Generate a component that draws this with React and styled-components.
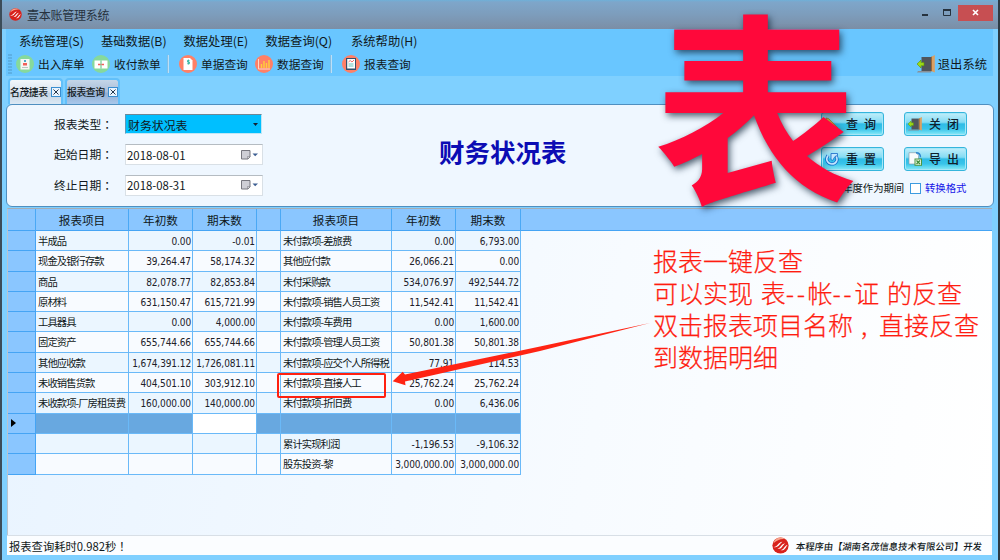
import React from "react";
import styled, { createGlobalStyle } from "styled-components";

const Global = createGlobalStyle`
  * { box-sizing: border-box; }
  html, body { margin: 0; padding: 0; }
  body { font-family: "Noto Sans CJK SC", sans-serif; color: #101820; overflow: hidden; }
  svg { display: block; flex: none; }
`;

const Window = styled.div`
  position: relative;
  width: 1000px;
  height: 560px;
  overflow: hidden;
  display: flex;
  flex-direction: column;
  background: #7fd0ff;
  border-left: 2px solid #3c4c58;
  border-right: 2px solid #2b3a44;
  white-space: nowrap;
`;

const TitleBar = styled.header`
  height: 29px;
  flex: none;
  display: flex;
  align-items: center;
  padding: 0 5px 0 7px;
  background: linear-gradient(#6fb0d8 0, #7ea6ca 2px, #7d9dbc 50%, #7b8ea6 100%);
`;

const TitleText = styled.h1`
  margin: 0 auto 0 5px;
  font-size: 12px;
  line-height: 20px;
  font-weight: 400;
  letter-spacing: -0.25px;
  color: #27323e;
`;

const WindowButton = styled.span`
  width: 22px;
  height: 16px;
  display: flex;
  align-items: center;
  justify-content: center;
  margin-bottom: 4px;
`;

const CloseButton = styled(WindowButton)`
  width: 35px;
  background: #c74f52;
`;

const Bars = styled.div`
  height: 47px;
  flex: none;
  margin: 0 5px 0 4px;
  background: #69c6ff;
`;

const MenuBar = styled.nav`
  height: 24px;
  display: flex;
  padding-left: 13px;
`;

const MenuItem = styled.span`
  width: ${(p) => p.$w}px;
  font-size: 12.3px;
  line-height: 24px;
`;

const ToolBar = styled.div`
  height: 23px;
  display: flex;
  align-items: center;
  padding: 0 6px 1px 2px;
`;

const Grip = styled.span`
  width: 4px;
  height: 20px;
  margin-right: 4px;
  background: radial-gradient(circle at 1px 1px, #57a4d6 0.6px, transparent 0.9px) 0 0 / 2px 3px;
`;

const Tool = styled.span`
  width: ${(p) => p.$w}px;
  display: flex;
  align-items: center;
  gap: 4px;
  font-size: 11.7px;
  line-height: 20px;
`;

const Divider = styled.i`
  width: 2px;
  height: 18px;
  background: linear-gradient(90deg, #69b0dd, #d8efff);
  margin-right: ${(p) => p.$gap}px;
`;

const ExitTool = styled.span`
  margin-left: auto;
  display: flex;
  align-items: center;
  gap: 3px;
  font-size: 12.3px;
  line-height: 20px;
`;

const TabStrip = styled.div`
  height: 28px;
  flex: none;
  display: flex;
  align-items: flex-end;
  gap: 2px;
  padding-left: 6px;
`;

const Tab = styled.div`
  width: 55px;
  height: 26px;
  padding: 0 0 0 0;
  display: flex;
  align-items: center;
  justify-content: space-between;
  border: 2px solid #62c0fa;
  border-bottom: 0;
  border-radius: 4px 4px 0 0;
  background: ${(p) => (p.$active ? "linear-gradient(#f2f7fb, #dae3ed 50%, #c6d4e2 55%, #dbe9f5)" : "linear-gradient(#c4d6e8, #a9bdd8 50%, #94adcf 55%, #a8c8ec)")};
  font-size: 9.8px;
  line-height: 20px;
  font-weight: 500;
  letter-spacing: -0.4px;
`;

const TabClose = styled.span`
  width: 10px;
  height: 10px;
  display: grid;
  place-items: center;
  border: 1px solid #3a8ed0;
  background: #e8f4ff;
`;

const QueryPanel = styled.section`
  height: 103px;
  flex: none;
  margin: 0 4px 0 4px;
  display: flex;
  border: 1.5px solid #4f8fc0;
  border-radius: 6px;
  background: #eff7ff;
`;

const Fields = styled.div`
  width: 411px;
  padding: 9px 0 0 47px;
`;

const Field = styled.div`
  height: 30.4px;
  display: flex;
  align-items: flex-start;
`;

const Label = styled.label`
  width: 71px;
  font-size: 11.8px;
  line-height: 20px;
  i { font-style: normal; font-family: "Noto Sans CJK TC", sans-serif; }
`;

const Select = styled.div`
  width: 137px;
  height: 20px;
  display: flex;
  align-items: center;
  justify-content: space-between;
  padding: 1px 3px 0 2px;
  border: 1px solid #5b9ab8;
  border-top-color: #6d8796;
  border-bottom-color: #bfe6f5;
  border-right-color: #bfe6f5;
  background: #00bfff;
  font-size: 11.9px;
  line-height: 18px;
`;

const DateInput = styled.div`
  width: 138px;
  height: 21px;
  display: flex;
  align-items: center;
  padding: 0 3px 0 1px;
  border: 1px solid #d9e0e6;
  border-top-color: #b5bcc2;
  background: #fff;
  font-size: 11.4px;
  line-height: 18px;
  span { flex: 1; }
`;

const Heading = styled.h2`
  width: 281px;
  margin: 0;
  padding: 28px 0 0 21px;
  font-size: 25.5px;
  line-height: 36px;
  font-weight: 700;
  color: #0c0cb4;
`;

const Actions = styled.div`
  flex: 1;
  padding: 7px 0 0 122px;
`;

const ButtonGrid = styled.div`
  display: grid;
  grid-template-columns: 63px 63px;
  grid-template-rows: 24px 24px;
  column-gap: 20px;
  row-gap: 11px;
`;

const Button = styled.button`
  display: flex;
  align-items: center;
  padding: 0 0 0 3px;
  border: 1px solid #35b5dc;
  border-radius: 3px;
  box-shadow: inset 0 0 0 1px #a5e7f8;
  background: linear-gradient(#c2eefa 0, #84dcf4 42%, #2fbce6 50%, #38c4ea 72%, #8cecf8 100%);
  color: #10202c;
  font-family: inherit;
  font-size: 12px;
  line-height: 20px;
  span { width: 36px; margin-left: 7px; display: flex; gap: 6px; }
  b { font-weight: 500; }
`;

const Options = styled.div`
  display: flex;
  align-items: center;
  margin-top: 8px;
  padding-left: 11px;
  font-size: 10.4px;
  line-height: 18px;
  letter-spacing: -0.1px;
`;

const Check = styled.span`
  width: 11px;
  height: 11px;
  margin: 0 4px 0 6px;
  border: 1px solid #3c9be0;
  background: #fff;
`;

const LinkText = styled.span`
  color: #1414e8;
`;

const GridArea = styled.main`
  flex: 1;
  margin: 1px 6px 0 5px;
  border-top: 1px solid #a5adb5;
  border-left: 1px solid #b8c4cf;
  background: linear-gradient(100deg, #e9f4ff 0%, #f7fbff 60%, #ffffff 100%);
`;

const cols = "28px 93px 64px 64px 24px 111px 64px 65px";

const HeaderRow = styled.div`
  height: 22px;
  display: grid;
  grid-template-columns: ${cols} 1fr;
  background: #8ac6ff;
  border-bottom: 1px solid #45a4f4;
`;

const HeadCell = styled.div`
  border-right: 1px solid #4aa8f5;
  text-align: center;
  font-size: 11.6px;
  line-height: 23px;
  &:last-child { border-right: 0; }
`;

const Row = styled.div`
  width: 513px;
  height: 20.3px;
  display: grid;
  grid-template-columns: ${cols};
  background: ${(p) => (p.$selected ? "#68a8e0" : p.$odd ? "#f8fbff" : "#ebf6ff")};
`;

const Cell = styled.div`
  overflow: hidden;
  border-right: 1px solid #6ab9f8;
  border-bottom: 1px solid #6ab9f8;
  line-height: 21px;
  background: ${(p) => (p.$editing ? "#fff" : "transparent")};
`;

const IndexCell = styled(Cell)`
  background: #8ac6ff;
  display: flex;
  align-items: center;
  padding-left: 3px;
  border-color: #45a4f4;
`;

const NameCell = styled(Cell)`
  padding-left: 2px;
  font-size: 10.3px;
  line-height: 20px;
  letter-spacing: -0.92px;
`;

const NumCell = styled(Cell)`
  padding-right: 1px;
  text-align: right;
  font-family: "DejaVu Sans Condensed", "Noto Sans", sans-serif;
  font-size: 10px;
  letter-spacing: -0.1px;
  color: #202028;
`;

const StatusBar = styled.footer`
  height: 20px;
  flex: none;
  margin: 0 6px 5px 5px;
  display: flex;
  align-items: center;
  justify-content: space-between;
  padding: 0 10px 0 2px;
  background: #fbfdff;
  border-top: 1px solid #d8dfe6;
  font-size: 11.3px;
  line-height: 18px;
  i { font-style: normal; font-family: "Noto Sans CJK TC", sans-serif; }
`;

const Credit = styled.span`
  display: flex;
  align-items: center;
  gap: 7px;
  font-size: 9.3px;
  b { font-weight: 500; transform: skewX(-6deg); }
`;

const BigMark = styled.div`
  position: absolute;
  left: 652px;
  top: -2px;
  width: 205px;
  font-size: 204px;
  line-height: 205px;
  font-weight: 700;
  color: #ff083a;
  text-shadow: 2px 3px 7px rgba(20, 40, 60, 0.75);
`;

const Note = styled.p`
  position: absolute;
  left: 651px;
  top: 244px;
  margin: 0;
  font-size: 25px;
  line-height: 32px;
  font-weight: 300;
  word-spacing: 2.3px;
  -webkit-text-stroke: 0.25px #ff1c10;
  color: #ff1c10;
`;

const Dashes = styled.span`
  letter-spacing: 2.5px;
`;

const Comma = styled.span`
  display: inline-block;
  width: 26px;
  padding-left: 8px;
`;

const HighlightBox = styled.div`
  position: absolute;
  left: 275px;
  top: 373px;
  width: 109px;
  height: 25px;
  border: 2px solid #ff2010;
  border-radius: 2px;
`;

const Arrow = styled.svg`
  position: absolute;
  left: 388px;
  top: 318px;
`;

const Logo = ({ size }) => (
  <svg width={size} height={size} viewBox="0 0 18 18">
    <circle cx="9" cy="9" r="8.6" fill="#d8221c" />
    <path d="M1.500 6.500a8 8 0 0 1 13-4c-5-1-9 1-13 4z" fill="#f7a48c" />
    <path d="M1.500 10.500c4 .5 5-5 9.500-5.500-3 2-4 7-9.500 5.500zM5 12.500c4 0 4.500-5.500 9-6-3 2-3.500 7-9 6zM9 14c4-.5 4-5 7.500-5.500-2 2-2.500 6.500-7.500 5.500z" fill="#fff" />
  </svg>
);

const Round = ({ color, children }) => (
  <svg width="18" height="18" viewBox="0 0 18 18">
    <circle cx="9" cy="9" r="9" fill={color} />
    {children}
  </svg>
);

const DoorIcon = ({ size = 18 }) => (
  <svg width={size} height={size} viewBox="0 0 18 18">
    <path d="M1 16h13v1.500H0z" fill="#8a9097" />
    <path d="M4.500 2H14v14H4.500z" fill="#50555c" />
    <path d="M14 2l3.800-2v17.500L14 16z" fill="#dba062" />
    <path d="M14 2l.8-.4v14.800L14 16z" fill="#8a5a2c" />
    <path d="M0 9l4-4v2.400h3v3.400H4V13z" fill="#9bd916" stroke="#5c8f0c" strokeWidth=".6" />
  </svg>
);

const PencilIcon = () => (
  <svg width="14" height="14" viewBox="0 0 14 14">
    <path d="M1 1l2.700.7L13 11l-2 2L1.600 3.700z" fill="#f2bd32" stroke="#a97515" strokeWidth=".7" />
  </svg>
);

const ResetIcon = () => (
  <svg width="14" height="14" viewBox="0 0 14 14">
    <path d="M3 3.500C0 8 3 12 7 12s6.500-4 4-8" fill="none" stroke="#1768c8" strokeWidth="3.200" />
    <path d="M3 3.500C0 8 3 12 7 12s6.500-4 4-8" fill="none" stroke="#c4e8ff" strokeWidth="1.600" />
    <path d="M6 1.500h6.500v2L10 4.500l-2.500 4-1.500-1z" fill="#c4e8ff" stroke="#1768c8" strokeWidth=".8" />
  </svg>
);

const ExportIcon = () => (
  <svg width="14" height="14" viewBox="0 0 14 14">
    <path d="M1 .7h7l2.500 2.500V12H1z" fill="#f8fbfd" stroke="#8aa0ae" strokeWidth=".7" />
    <path d="M8 .7c3 0 4.500 1.500 4.500 4.500" fill="none" stroke="#2c84cf" strokeWidth="1.400" />
    <rect x="7" y="7" width="6.500" height="6.300" fill="#e4f4dd" stroke="#4c9644" strokeWidth="1" />
    <path d="M8.500 8.500l3.500 3.500m0-3.500L8.500 12" stroke="#3e8c37" strokeWidth="1.200" />
  </svg>
);

const CalendarIcon = () => (
  <svg width="18" height="12" viewBox="0 0 18 12">
    <path d="M.5 1.500h8.500v6.500L7 10H.5z" fill="#cfcfd6" stroke="#77777f" />
    <path d="M9 7.500H6.500V10z" fill="#fff" stroke="#77777f" strokeWidth=".6" />
    <path d="M11.500 4.500h5.500L14.200 7.300z" fill="#3d5f92" />
  </svg>
);

const rows = [
  ["半成品", "0.00", "-0.01", "未付款项-差旅费", "0.00", "6,793.00"],
  ["现金及银行存款", "39,264.47", "58,174.32", "其他应付款", "26,066.21", "0.00"],
  ["商品", "82,078.77", "82,853.84", "未付采购款", "534,076.97", "492,544.72"],
  ["原材料", "631,150.47", "615,721.99", "未付款项-销售人员工资", "11,542.41", "11,542.41"],
  ["工具器具", "0.00", "4,000.00", "未付款项-车费用", "0.00", "1,600.00"],
  ["固定资产", "655,744.66", "655,744.66", "未付款项-管理人员工资", "50,801.38", "50,801.38"],
  ["其他应收款", "1,674,391.12", "1,726,081.11", "未付款项-应交个人所得税", "77.91", "114.53"],
  ["未收销售货款", "404,501.10", "303,912.10", "未付款项-直接人工", "25,762.24", "25,762.24"],
  ["未收款项-厂房租赁费", "160,000.00", "140,000.00", "未付款项-折旧费", "0.00", "6,436.06"],
  ["", "", "", "", "", ""],
  ["", "", "", "累计实现利润", "-1,196.53", "-9,106.32"],
  ["", "", "", "股东投资-黎", "3,000,000.00", "3,000,000.00"],
];
const SELECTED = 9;

const heads = ["", "报表项目", "年初数", "期末数", "", "报表项目", "年初数", "期末数", ""];

export default function App() {
  return (
    <Window>
      <Global />
      <TitleBar>
        <Logo size={13} />
        <TitleText>壹本账管理系统</TitleText>
        <WindowButton>
          <svg width="7" height="8"><path d="M0 5h6v2H0z" fill="#26323e" /></svg>
        </WindowButton>
        <WindowButton>
          <svg width="8" height="8"><path d="M.5 1h7v5.500h-7z" fill="none" stroke="#26323e" /><path d="M0 0h8v2H0z" fill="#26323e" /></svg>
        </WindowButton>
        <CloseButton>
          <svg width="7" height="7"><path d="M1 1l5 5m0-5L1 6" stroke="#fff" strokeWidth="1.600" /></svg>
        </CloseButton>
      </TitleBar>

      <Bars>
        <MenuBar>
          <MenuItem $w={82}>系统管理(S)</MenuItem>
          <MenuItem $w={82.5}>基础数据(B)</MenuItem>
          <MenuItem $w={82}>数据处理(E)</MenuItem>
          <MenuItem $w={85.5}>数据查询(Q)</MenuItem>
          <MenuItem $w={80}>系统帮助(H)</MenuItem>
        </MenuBar>
        <ToolBar>
          <Grip />
          <Tool $w={76}>
            <Round color="#86d99c">
              <path d="M4.500 4h9v10.500h-9z" fill="#f5f7f5" />
              <path d="M7 8h4v2.500H7z" fill="#f0605a" />
              <path d="M8 5h2v2H8z" fill="#51a9c9" />
              <path d="M6 12.500h6" stroke="#b9c7c0" />
            </Round>
            出入库单
          </Tool>
          <Tool $w={75}>
            <Round color="#86d99c">
              <path d="M2.500 5.500h6v8h-6zM9.500 5.500h6v8h-6z" fill="#fff" />
              <path d="M6 9.500h6" stroke="#f0605a" strokeWidth="1.500" />
              <path d="M9 6v7" stroke="#8fd6b0" />
            </Round>
            收付款单
          </Tool>
          <Divider $gap={10} />
          <Tool $w={76}>
            <Round color="#ff8067">
              <path d="M4.500 3h6.500l2.500 2.500V15h-9z" fill="#fff" />
              <path d="M10.500 5.500H8.500v1.500h2v1.700h-2.200M9.400 4.500v5" fill="none" stroke="#35b8a5" strokeWidth=".9" />
            </Round>
            单据查询
          </Tool>
          <Tool $w={75}>
            <Round color="#ff8067">
              <path d="M3.500 4v10h11.500" fill="none" stroke="#ffd9c8" />
              <path d="M6.500 13V9M9 13V6M11.500 13V8M14 13V5" stroke="#ffd03a" strokeWidth="1.400" />
            </Round>
            数据查询
          </Tool>
          <Divider $gap={10} />
          <Tool $w={76}>
            <Round color="#ff8067">
              <path d="M4 3h10v12H4z" fill="#33506c" />
              <path d="M5.200 4h7.800v9.500H5.200z" fill="#fff" />
              <path d="M6.500 7l1.700-1.500L10 7l2-2" fill="none" stroke="#f0605a" strokeWidth=".9" />
              <path d="M6.500 9h5M6.500 11h5" stroke="#66c6bd" />
            </Round>
            报表查询
          </Tool>
          <ExitTool>
            <DoorIcon />
            退出系统
          </ExitTool>
        </ToolBar>
      </Bars>

      <TabStrip>
        {["名茂捷表", "报表查询"].map((t, i) => (
          <Tab key={t} $active={i === 0}>
            {t}
            <TabClose>
              <svg width="6" height="6"><path d="M.5.500l5 5m0-5l-5 5" stroke="#24364a" /></svg>
            </TabClose>
          </Tab>
        ))}
      </TabStrip>

      <QueryPanel>
        <Fields>
          <Field>
            <Label>报表类型<i>：</i></Label>
            <Select>
              财务状况表
              <svg width="5" height="3"><path d="M0 0h5L2.500 3z" fill="#123" /></svg>
            </Select>
          </Field>
          <Field>
            <Label>起始日期<i>：</i></Label>
            <DateInput><span>2018-08-01</span><CalendarIcon /></DateInput>
          </Field>
          <Field>
            <Label>终止日期<i>：</i></Label>
            <DateInput><span>2018-08-31</span><CalendarIcon /></DateInput>
          </Field>
        </Fields>
        <Heading>财务状况表</Heading>
        <Actions>
          <ButtonGrid>
            <Button><PencilIcon /><span><b>查</b><b>询</b></span></Button>
            <Button><DoorIcon size={14} /><span><b>关</b><b>闭</b></span></Button>
            <Button><ResetIcon /><span><b>重</b><b>置</b></span></Button>
            <Button><ExportIcon /><span><b>导</b><b>出</b></span></Button>
          </ButtonGrid>
          <Options>
            按年度作为期间
            <Check />
            <LinkText>转换格式</LinkText>
          </Options>
        </Actions>
      </QueryPanel>

      <GridArea>
        <HeaderRow>
          {heads.map((h, i) => <HeadCell key={i}>{h}</HeadCell>)}
        </HeaderRow>
        {rows.map((r, i) => (
          <Row key={i} $odd={i % 2 === 1} $selected={i === SELECTED}>
            <IndexCell>
              {i === SELECTED && <svg width="5" height="8"><path d="M0 0l5 4-5 4z" fill="#000" /></svg>}
            </IndexCell>
            <NameCell>{r[0]}</NameCell>
            <NumCell>{r[1]}</NumCell>
            <NumCell $editing={i === SELECTED}>{r[2]}</NumCell>
            <Cell />
            <NameCell>{r[3]}</NameCell>
            <NumCell>{r[4]}</NumCell>
            <NumCell>{r[5]}</NumCell>
          </Row>
        ))}
      </GridArea>

      <StatusBar>
        <span>报表查询耗时0.982秒<i>！</i></span>
        <Credit>
          <Logo size={17} />
          <b>本程序由【湖南名茂信息技术有限公司】开发</b>
        </Credit>
      </StatusBar>

      <BigMark>表</BigMark>
      <Note>
        报表一键反查<br />
        可以实现 表<Dashes>--</Dashes>帐<Dashes>--</Dashes>证 的反查<br />
        双击报表项目名称<Comma>,</Comma>直接反查<br />
        到数据明细
      </Note>
      <HighlightBox />
      <Arrow width="265" height="72" viewBox="390 318 265 72">
        <path d="M392.700 381.300L402.700 371.700L405 374.500L540 346.500L650 323L540 351L405 381.500L405.500 385.200z" fill="#ff2414" />
      </Arrow>
    </Window>
  );
}
